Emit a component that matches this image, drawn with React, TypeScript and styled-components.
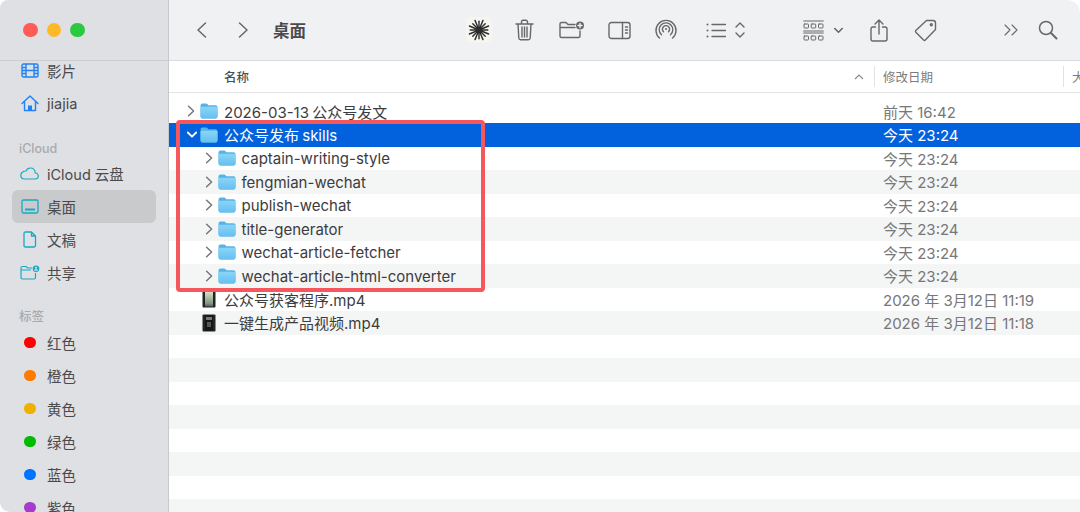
import React from 'react';
import styled, {createGlobalStyle} from 'styled-components';

const FONT = `Inter, "Noto Sans CJK SC", sans-serif`;

const GlobalStyle = createGlobalStyle`
    html, body {
        margin: 0;
        padding: 0;
        background: #fff;
    }
    body {
        width: 1080px;
        height: 512px;
        overflow: hidden;
        font-family: ${FONT};
    }
`;

const Stroke: React.FC<{w?: number; h?: number; vb: string; children: React.ReactNode}> = ({w, h, vb, children}) => (
    <svg width={w} height={h} viewBox={vb} fill="none" stroke="#68686a" strokeWidth={1.4} strokeLinecap="round" strokeLinejoin="round">
        {children}
    </svg>
);

const FolderIcon = () => (
    <svg width={18} height={16} viewBox="0 0 18 16">
        <defs>
            <linearGradient id="fold" x1="0" y1="0" x2="0" y2="1">
                <stop offset="0" stopColor="#8ad5f8" />
                <stop offset="1" stopColor="#64bff0" />
            </linearGradient>
        </defs>
        <path d="M0.5 2.5 Q0.5 0.5 2.5 0.5 H6 Q7 0.5 7.6 1.3 L8.3 2.2 H15.5 Q17.5 2.2 17.5 4 V13 Q17.5 15.5 15.5 15.5 H2.5 Q0.5 15.5 0.5 13 Z" fill="#56b3e8" />
        <path d="M0.5 5 Q0.5 3.8 2 3.8 H16 Q17.5 3.8 17.5 5 V13.5 Q17.5 15.5 15.5 15.5 H2.5 Q0.5 15.5 0.5 13.5 Z" fill="url(#fold)" />
    </svg>
);

const Chevron: React.FC<{open?: boolean; light?: boolean}> = ({open, light}) => (
    <svg width={10} height={12} viewBox="0 0 10 12" fill="none" stroke={light ? '#fff' : '#77787a'} strokeWidth={light ? 1.8 : 1.5} strokeLinecap="round" strokeLinejoin="round">
        {open ? <path d="M0.8 3.5 L5 7.7 L9.2 3.5" /> : <path d="M1.6 1.2 L6.6 6 L1.6 10.8" />}
    </svg>
);

const VideoThumb: React.FC<{dark?: boolean}> = ({dark}) => (
    <svg width={14} height={18} viewBox="0 0 14 18">
        <defs>
            <linearGradient id="clip" x1="0" y1="0" x2="0" y2="1">
                <stop offset="0" stopColor="#dcdfd0" />
                <stop offset="0.35" stopColor="#b4c2aa" />
                <stop offset="0.8" stopColor="#7f9680" />
                <stop offset="1" stopColor="#54605a" />
            </linearGradient>
        </defs>
        <rect x="0.5" y="0.5" width="13" height="17" rx="1" fill="#242424" />
        {dark ? (
            <>
                <rect x="3" y="1.5" width="8" height="15" fill="#161616" />
                <rect x="4" y="3" width="6" height="3" fill="#77797c" />
                <rect x="5" y="8" width="4" height="5" fill="#55575a" />
            </>
        ) : (
            <rect x="3" y="1.5" width="8" height="15" fill="url(#clip)" />
        )}
    </svg>
);

const Win = styled.div`
    position: relative;
    width: 1080px;
    height: 512px;
    display: flex;
    overflow: hidden;
    border-radius: 8px 13px 0 10px;
    background: #fff;
`;

const Sidebar = styled.aside`
    width: 169px;
    flex: none;
    box-sizing: border-box;
    display: flex;
    flex-direction: column;
    background: #dfe0e3;
    border-right: 1px solid #c8c9cb;
`;

const TrafficBar = styled.div`
    height: 61px;
    flex: none;
    display: flex;
    align-items: center;
    gap: 9px;
    padding-left: 23px;
    box-sizing: border-box;
    border-bottom: 1px solid #cbcccd;
`;

const Light = styled.span<{$c: string}>`
    width: 14.5px;
    height: 14.5px;
    border-radius: 50%;
    background: ${p => p.$c};
`;

const SideScroll = styled.div`
    flex: 1;
    min-height: 0;
    overflow: hidden;
    padding: 0 12px;
    margin-top: -7px;
`;

const SideItem = styled.div<{$active?: boolean}>`
    height: 33px;
    display: flex;
    align-items: center;
    border-radius: 6px;
    background: ${p => (p.$active ? '#c9cacb' : 'transparent')};
    font-size: 14.5px;
    color: #4a4a4c;
`;

const SideIconSlot = styled.span`
    width: 35px;
    flex: none;
    display: flex;
    justify-content: center;
`;

const SectionLabel = styled.div<{$top: number; $bottom: number}>`
    height: 20px;
    margin: ${p => p.$top}px 0 ${p => p.$bottom}px;
    padding-left: 7px;
    display: flex;
    align-items: center;
    font-size: 12.5px;
    font-weight: 500;
    color: #a9aaad;
`;

const TagDot = styled.span<{$c: string}>`
    width: 11.5px;
    height: 11.5px;
    border-radius: 50%;
    background: ${p => p.$c};
    margin-left: 1px;
`;

const Main = styled.main`
    flex: 1;
    min-width: 0;
    display: flex;
    flex-direction: column;
`;

const Toolbar = styled.header`
    height: 61px;
    flex: none;
    box-sizing: border-box;
    background: #f0f1f3;
    border-bottom: 1px solid #dcdcde;
    display: flex;
    align-items: center;
    padding-left: 25px;
`;

const TitleText = styled.div`
    width: 193px;
    flex: none;
    margin-left: 23px;
    font-size: 16.5px;
    font-weight: 700;
    color: #4b4b4d;
`;

const ToolSlot = styled.span<{$w: number; $gap?: number}>`
    width: ${p => p.$w}px;
    margin-left: ${p => p.$gap || 0}px;
    flex: none;
    display: flex;
    align-items: center;
    justify-content: center;
`;

const StarTile = styled.span`
    width: 26px;
    height: 26px;
    border-radius: 6px;
    background: #f6f5ef;
    display: flex;
    align-items: center;
    justify-content: center;
`;

const ColumnHeader = styled.div`
    height: 32px;
    flex: none;
    box-sizing: border-box;
    border-bottom: 1px solid #e4e4e5;
    display: flex;
    align-items: center;
    font-size: 12.5px;
    font-weight: 500;
    color: #4d4d4f;
`;

const NameHead = styled.div`
    width: 705px;
    flex: none;
    box-sizing: border-box;
    padding: 0 10px 0 55px;
    display: flex;
    justify-content: space-between;
    align-items: center;
`;

const DateHead = styled.div`
    width: 189px;
    flex: none;
    box-sizing: border-box;
    height: 21px;
    display: flex;
    align-items: center;
    padding-left: 8px;
    border-left: 1px solid #e2e2e3;
    color: #7c7c7e;
    font-weight: 400;
`;

const SizeHead = styled.div`
    flex: 1;
    min-width: 0;
    height: 21px;
    display: flex;
    align-items: center;
    padding-left: 8px;
    border-left: 1px solid #e2e2e3;
    color: #7c7c7e;
    font-weight: 400;
    overflow: hidden;
    white-space: nowrap;
`;

const Rows = styled.div`
    flex: 1;
    min-height: 0;
    overflow: hidden;
    padding-top: 6.5px;
`;

const Row = styled.div<{$stripe?: boolean; $selected?: boolean}>`
    height: 23.5px;
    display: flex;
    align-items: center;
    background: ${p => (p.$selected ? '#0262de' : p.$stripe ? '#f4f5f5' : '#fff')};
    color: ${p => (p.$selected ? '#fff' : '#3c3c3e')};
    font-size: 15px;
`;

const NameCell = styled.div<{$depth: number}>`
    width: 714px;
    flex: none;
    box-sizing: border-box;
    padding-left: ${p => 18 + p.$depth * 17.5}px;
    display: flex;
    align-items: center;
    white-space: nowrap;
    word-spacing: -1px;
`;

const Disclosure = styled.span`
    width: 12px;
    flex: none;
    display: flex;
    align-items: center;
`;

const FileIcon = styled.span<{$inset: number}>`
    width: 25px;
    flex: none;
    box-sizing: border-box;
    padding-left: ${p => p.$inset}px;
    display: flex;
    align-items: center;
`;

/* latin-only names sit a pixel high without the CJK line box */
const NameText = styled.span<{$latin: boolean}>`
    padding-top: ${p => (p.$latin ? 1 : 0)}px;
`;

const DateCell = styled.div<{$selected?: boolean}>`
    color: ${p => (p.$selected ? '#fff' : '#77777a')};
    white-space: nowrap;
`;

const Highlight = styled.div`
    position: absolute;
    left: 175.5px;
    top: 120px;
    width: 309px;
    height: 171.5px;
    box-sizing: border-box;
    border: 4px solid #f6575c;
    border-radius: 4px;
    pointer-events: none;
`;

interface FileRow {
    name: string;
    date: string;
    depth: number;
    kind: 'folder' | 'video' | 'videoDark';
    open?: boolean;
    selected?: boolean;
}

const files: FileRow[] = [
    {name: '2026-03-13 公众号发文', date: '前天 16:42', depth: 0, kind: 'folder'},
    {name: '公众号发布 skills', date: '今天 23:24', depth: 0, kind: 'folder', open: true, selected: true},
    {name: 'captain-writing-style', date: '今天 23:24', depth: 1, kind: 'folder'},
    {name: 'fengmian-wechat', date: '今天 23:24', depth: 1, kind: 'folder'},
    {name: 'publish-wechat', date: '今天 23:24', depth: 1, kind: 'folder'},
    {name: 'title-generator', date: '今天 23:24', depth: 1, kind: 'folder'},
    {name: 'wechat-article-fetcher', date: '今天 23:24', depth: 1, kind: 'folder'},
    {name: 'wechat-article-html-converter', date: '今天 23:24', depth: 1, kind: 'folder'},
    {name: '公众号获客程序.mp4', date: '2026 年 3月12日 11:19', depth: 0, kind: 'video'},
    {name: '一键生成产品视频.mp4', date: '2026 年 3月12日 11:18', depth: 0, kind: 'videoDark'},
];

const stripes = [0, 1, 2, 3, 4, 5, 6, 7];

const tags = [
    {label: '红色', color: '#fe0000'},
    {label: '橙色', color: '#fe7a00'},
    {label: '黄色', color: '#f0b000'},
    {label: '绿色', color: '#00bb00'},
    {label: '蓝色', color: '#0074ff'},
    {label: '紫色', color: '#a63ccc'},
];

const blue = '#1f83f5';
const teal = '#18a8c4';

const Side = () => (
    <Sidebar>
        <TrafficBar>
            <Light $c="#fe5c54" />
            <Light $c="#feb829" />
            <Light $c="#2ac940" />
        </TrafficBar>
        <SideScroll>
            <SideItem>
                <SideIconSlot>
                    <svg width={18} height={15} viewBox="0 0 18 15" fill="none" stroke={blue} strokeWidth={1.4}>
                        <rect x="1" y="1" width="16" height="13" rx="1.5" />
                        <path d="M5 1 V14 M13 1 V14 M5 7.5 H13 M1 4.5 H5 M1 7.5 H5 M1 10.5 H5 M13 4.5 H17 M13 7.5 H17 M13 10.5 H17" />
                    </svg>
                </SideIconSlot>
                影片
            </SideItem>
            <SideItem>
                <SideIconSlot>
                    <svg width={18} height={17} viewBox="0 0 18 17" fill="none" stroke={blue} strokeWidth={1.4} strokeLinejoin="round" strokeLinecap="round">
                        <path d="M1 8.5 L9 1 L17 8.5 M3.5 6.5 V15.5 H14.5 V6.5" />
                        <rect x="7" y="10.5" width="4" height="5" fill={blue} stroke="none" />
                    </svg>
                </SideIconSlot>
                jiajia
            </SideItem>
            <SectionLabel $top={18} $bottom={-1}>iCloud</SectionLabel>
            <SideItem>
                <SideIconSlot>
                    <svg width={19} height={13} viewBox="0 0 19 13" fill="none" stroke={teal} strokeWidth={1.2}>
                        <path d="M4.5 12 H15 C17 12 18.3 10.6 18.3 9 C18.3 7.2 17 6 15.3 6 C15 3 13 1 10.4 1 C8.2 1 6.7 2.3 6 4 C3 4 0.8 6 0.8 8.3 C0.8 10.4 2.4 12 4.5 12 Z" />
                    </svg>
                </SideIconSlot>
                iCloud 云盘
            </SideItem>
            <SideItem $active>
                <SideIconSlot>
                    <svg width={18} height={15} viewBox="0 0 18 15" fill="none" stroke={teal} strokeWidth={1.3}>
                        <rect x="1" y="1" width="16" height="13" rx="1.5" />
                        <rect x="4" y="9.5" width="10" height="2" fill={teal} stroke="none" />
                    </svg>
                </SideIconSlot>
                桌面
            </SideItem>
            <SideItem>
                <SideIconSlot>
                    <svg width={14} height={17} viewBox="0 0 14 17" fill="none" stroke={teal} strokeWidth={1.3} strokeLinejoin="round">
                        <path d="M2.5 1 H8.5 L12.5 5 V14.5 Q12.5 16 11 16 H2.5 Q1 16 1 14.5 V2.5 Q1 1 2.5 1 Z M8.5 1 V5 H12.5" />
                    </svg>
                </SideIconSlot>
                文稿
            </SideItem>
            <SideItem>
                <SideIconSlot>
                    <svg width={20} height={15} viewBox="0 0 20 15" fill="none" stroke={teal} strokeWidth={1.2}>
                        <path d="M1 3 Q1 1.5 2.5 1.5 H6 L7.5 3 H12 M1 3 V12.5 Q1 14 2.5 14 H14 Q15.5 14 15.5 12.5 V8 M1 5 H11" />
                        <circle cx="16" cy="3.7" r="3.3" fill={teal} stroke="none" />
                        <circle cx="16" cy="2.8" r="1" fill="#dfe0e3" stroke="none" />
                        <path d="M14.5 5.6 Q16 3.7 17.5 5.6" stroke="#dfe0e3" />
                    </svg>
                </SideIconSlot>
                共享
            </SideItem>
            <SectionLabel $top={16} $bottom={1}>标签</SectionLabel>
            {tags.map(t => (
                <SideItem key={t.label}>
                    <SideIconSlot>
                        <TagDot $c={t.color} />
                    </SideIconSlot>
                    {t.label}
                </SideItem>
            ))}
        </SideScroll>
    </Sidebar>
);

const ToolIcons = () => (
    <>
        <ToolSlot $w={26}>
            <StarTile>
                <svg width={22} height={22} viewBox="0 0 22 22" stroke="#2c2c2c" strokeWidth={1.4} strokeLinecap="round">
                    {Array.from({length: 16}).map((_, i) => {
                        const a = (i / 16) * Math.PI * 2;
                        const r = i % 2 ? 10.4 : 8.8;
                        return <line key={i} x1={11} y1={11} x2={11 + Math.cos(a) * r} y2={11 + Math.sin(a) * r} />;
                    })}
                    <circle cx="11" cy="11" r="3.6" fill="#2c2c2c" stroke="none" />
                </svg>
            </StarTile>
        </ToolSlot>
        <ToolSlot $w={19} $gap={22.5}>
            <Stroke w={19} h={22} vb="0 0 19 22">
                <path d="M1 5 H18 M6.5 5 V3 Q6.5 1.2 8 1.2 H11 Q12.5 1.2 12.5 3 V5 M3 5 L3.8 19 Q4 20.8 5.6 20.8 H13.4 Q15 20.8 15.2 19 L16 5 M7 8 V18 M9.5 8 V18 M12 8 V18" />
            </Stroke>
        </ToolSlot>
        <ToolSlot $w={26} $gap={25.5}>
            <Stroke w={26} h={18} vb="0 0 26 18">
                <path d="M1 3 Q1 1.5 2.5 1.5 H7 L9 3.5 H16 M1 3 V15 Q1 16.5 2.5 16.5 H19.5 Q21 16.5 21 15 V10 M1 6.5 H16" />
                <circle cx="21" cy="4.5" r="4" fill="#68686a" stroke="none" />
                <path d="M19 4.5 H23 M21 2.5 V6.5" stroke="#f0f1f3" />
            </Stroke>
        </ToolSlot>
        <ToolSlot $w={23} $gap={22.5}>
            <Stroke w={23} h={19} vb="0 0 23 19">
                <rect x="1" y="1.5" width="21" height="16" rx="2.5" />
                <path d="M14.5 1.5 V17.5 M17.5 6 H19.5 M17.5 9 H19.5 M17.5 12 H19.5" />
            </Stroke>
        </ToolSlot>
        <ToolSlot $w={22} $gap={24.5}>
            <Stroke w={22} h={22} vb="0 0 22 22">
                <path d="M4.5 19 A10 10 0 1 1 17.5 19 M6.5 15.8 A6.8 6.8 0 1 1 15.5 15.8 M8.5 12.8 A3.6 3.6 0 1 1 13.5 12.8" />
                <circle cx="11" cy="10" r="1" fill="#68686a" stroke="none" />
            </Stroke>
        </ToolSlot>
    </>
);

const ViewIcons = () => (
    <>
        <ToolSlot $w={20} $gap={28.5}>
            <Stroke w={20} h={15} vb="0 0 20 15">
                <path d="M6 1.5 H19.5 M6 7.5 H19.5 M6 13.5 H19.5" />
                <circle cx="1.5" cy="1.5" r="1" fill="#68686a" stroke="none" />
                <circle cx="1.5" cy="7.5" r="1" fill="#68686a" stroke="none" />
                <circle cx="1.5" cy="13.5" r="1" fill="#68686a" stroke="none" />
            </Stroke>
        </ToolSlot>
        <ToolSlot $w={10} $gap={9.5}>
            <Stroke w={10} h={16} vb="0 0 10 16">
                <path d="M1 5 L5 1 L9 5 M1 11 L5 15 L9 11" />
            </Stroke>
        </ToolSlot>
    </>
);

const RightIcons = () => (
    <>
        <ToolSlot $w={21} $gap={58}>
            <Stroke w={21} h={21} vb="0 0 21 21">
                <path d="M0.7 1 H20.3 M0.7 11 H20.3 M0.7 13 H20.3" strokeWidth={1.1} />
                <rect x="1" y="4" width="4.5" height="4" rx="0.7" strokeWidth={1} />
                <rect x="8.2" y="4" width="4.5" height="4" rx="0.7" strokeWidth={1} />
                <rect x="15.5" y="4" width="4.5" height="4" rx="0.7" strokeWidth={1} />
                <rect x="1" y="16" width="4.5" height="4" rx="0.7" strokeWidth={1} />
                <rect x="8.2" y="16" width="4.5" height="4" rx="0.7" strokeWidth={1} />
                <rect x="15.5" y="16" width="4.5" height="4" rx="0.7" strokeWidth={1} />
            </Stroke>
        </ToolSlot>
        <ToolSlot $w={9} $gap={10}>
            <Stroke w={9} h={7} vb="0 0 9 7">
                <path d="M0.8 1.5 L4.5 5.2 L8.2 1.5" strokeWidth={1.6} />
            </Stroke>
        </ToolSlot>
        <ToolSlot $w={18} $gap={27}>
            <Stroke w={18} h={23} vb="0 0 18 23">
                <path d="M5.5 8 H3 Q1 8 1 10 V20 Q1 22 3 22 H15 Q17 22 17 20 V10 Q17 8 15 8 H12.5 M9 15 V1.5 M5 5 L9 1 L13 5" />
            </Stroke>
        </ToolSlot>
        <ToolSlot $w={23} $gap={26}>
            <Stroke w={23} h={23} vb="0 0 23 23">
                <path d="M12.5 1.5 H19 Q21.5 1.5 21.5 4 V10.5 L11.3 21 Q10.5 21.8 9.6 21 L1.8 13.3 Q1 12.5 1.8 11.6 Z" />
                <circle cx="17.3" cy="5.7" r="1" />
            </Stroke>
        </ToolSlot>
        <ToolSlot $w={15} $gap={67}>
            <Stroke w={15} h={12} vb="0 0 15 12">
                <path d="M1 1 L6 6 L1 11 M8 1 L13 6 L8 11" strokeWidth={1.1} />
            </Stroke>
        </ToolSlot>
        <ToolSlot $w={20} $gap={19}>
            <Stroke w={20} h={20} vb="0 0 20 20">
                <circle cx="8" cy="8" r="6.5" strokeWidth={1.5} />
                <path d="M13 13 L18.5 18.5" strokeWidth={2} />
            </Stroke>
        </ToolSlot>
    </>
);

const App: React.FC = () => {
    return (
        <>
            <GlobalStyle />
            <Win>
                <Side />
                <Main>
                    <Toolbar>
                        <ToolSlot $w={14}>
                            <Stroke w={13} h={18} vb="0 0 13 18">
                                <path d="M10.5 2 L3 9 L10.5 16" strokeWidth={1.5} />
                            </Stroke>
                        </ToolSlot>
                        <ToolSlot $w={14} $gap={28}>
                            <Stroke w={13} h={18} vb="0 0 13 18">
                                <path d="M2.5 2 L10 9 L2.5 16" strokeWidth={1.5} />
                            </Stroke>
                        </ToolSlot>
                        <TitleText>桌面</TitleText>
                        <ToolIcons />
                        <ViewIcons />
                        <RightIcons />
                    </Toolbar>
                    <ColumnHeader>
                        <NameHead>
                            <span>名称</span>
                            <svg width={10} height={6} viewBox="0 0 10 6" fill="none" stroke="#8a8a8c" strokeWidth={1.1}>
                                <path d="M1 5 L5 1 L9 5" />
                            </svg>
                        </NameHead>
                        <DateHead>修改日期</DateHead>
                        <SizeHead>大小</SizeHead>
                    </ColumnHeader>
                    <Rows>
                        {files.map((f, i) => (
                            <Row key={f.name} $selected={f.selected} $stripe={i % 2 === 1}>
                                <NameCell $depth={f.depth}>
                                    <Disclosure>
                                        {f.kind === 'folder' && <Chevron open={f.open} light={f.selected} />}
                                    </Disclosure>
                                    <FileIcon $inset={f.kind === 'folder' ? 1 : 3}>
                                        {f.kind === 'folder' && <FolderIcon />}
                                        {f.kind === 'video' && <VideoThumb />}
                                        {f.kind === 'videoDark' && <VideoThumb dark />}
                                    </FileIcon>
                                    <NameText $latin={f.depth > 0}>{f.name}</NameText>
                                </NameCell>
                                <DateCell $selected={f.selected}>{f.date}</DateCell>
                            </Row>
                        ))}
                        {stripes.map(i => (
                            <Row key={i} $stripe={i % 2 === 1} />
                        ))}
                    </Rows>
                </Main>
                <Highlight />
            </Win>
        </>
    );
};

export default App;
